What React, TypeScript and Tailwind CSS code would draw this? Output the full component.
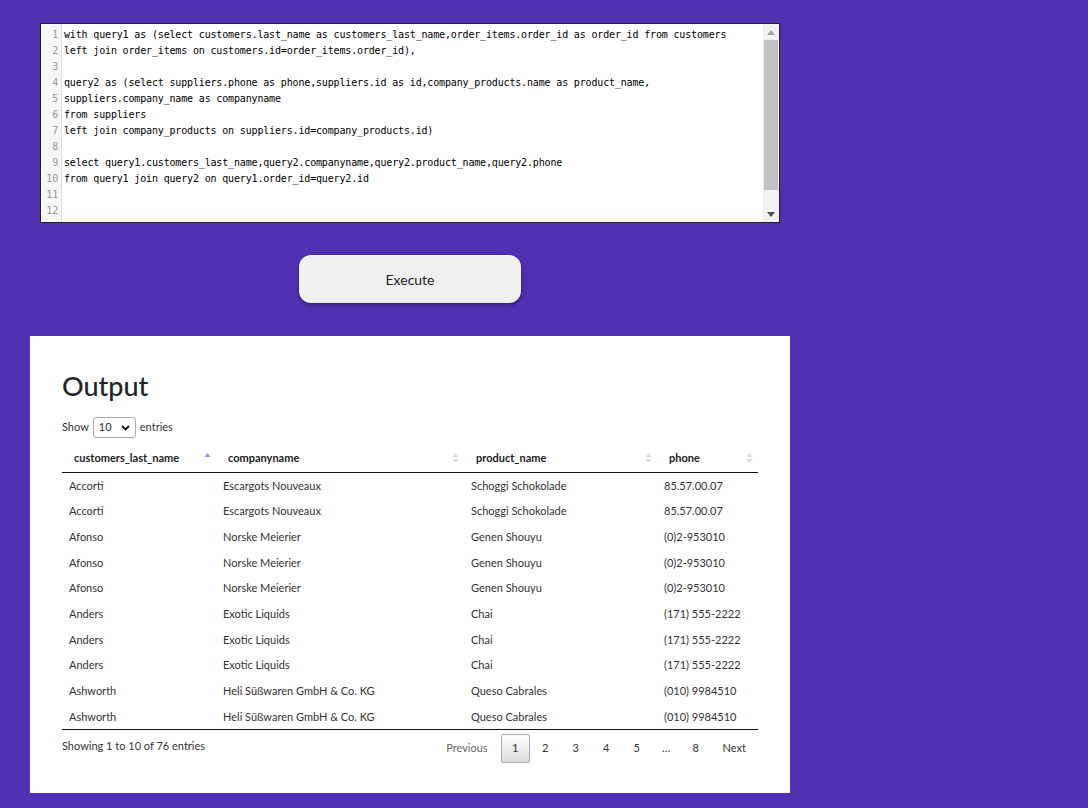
import React from "react";

const codeLines = [
  "with query1 as (select customers.last_name as customers_last_name,order_items.order_id as order_id from customers",
  "left join order_items on customers.id=order_items.order_id),",
  "",
  "query2 as (select suppliers.phone as phone,suppliers.id as id,company_products.name as product_name,",
  "suppliers.company_name as companyname",
  "from suppliers",
  "left join company_products on suppliers.id=company_products.id)",
  "",
  "select query1.customers_last_name,query2.companyname,query2.product_name,query2.phone",
  "from query1 join query2 on query1.order_id=query2.id",
  "",
  "",
];

const rows = [
  ["Accorti", "Escargots Nouveaux", "Schoggi Schokolade", "85.57.00.07"],
  ["Accorti", "Escargots Nouveaux", "Schoggi Schokolade", "85.57.00.07"],
  ["Afonso", "Norske Meierier", "Genen Shouyu", "(0)2-953010"],
  ["Afonso", "Norske Meierier", "Genen Shouyu", "(0)2-953010"],
  ["Afonso", "Norske Meierier", "Genen Shouyu", "(0)2-953010"],
  ["Anders", "Exotic Liquids", "Chai", "(171) 555-2222"],
  ["Anders", "Exotic Liquids", "Chai", "(171) 555-2222"],
  ["Anders", "Exotic Liquids", "Chai", "(171) 555-2222"],
  ["Ashworth", "Heli Süßwaren GmbH & Co. KG", "Queso Cabrales", "(010) 9984510"],
  ["Ashworth", "Heli Süßwaren GmbH & Co. KG", "Queso Cabrales", "(010) 9984510"],
];

function SortIcon({ active }: { active?: boolean }) {
  if (active) {
    return (
      <svg width="7" height="12" viewBox="0 0 7 12" className="shrink-0">
        <polygon points="3.5,1 6.5,5 0.5,5" fill="#8c94e8" />
      </svg>
    );
  }
  return (
    <svg width="7" height="12" viewBox="0 0 7 12" className="shrink-0">
      <polygon points="3.5,1 6.5,5 0.5,5" fill="#dcdcdc" />
      <polygon points="3.5,11 6.5,7 0.5,7" fill="#dcdcdc" />
    </svg>
  );
}

const headers = [
  { label: "customers_last_name", w: "w-[154px]", active: true },
  { label: "companyname", w: "w-[248px]" },
  { label: "product_name", w: "w-[193px]" },
  { label: "phone", w: "w-[101px]" },
];

const mono = { fontFamily: "'DejaVu Sans Mono', monospace", letterSpacing: "-0.16px" };

export default function App() {
  return (
    <div
      className="min-h-[808px] w-[1088px] bg-[#5131b1] pt-[23px] pb-[14px]"
      style={{ fontFamily: "Lato, 'Noto Sans', sans-serif" }}
    >
      {/* Editor */}
      <div className="ml-[40px] flex h-[200px] w-[740px] border border-[#222] bg-white">
        <div className="w-[21px] shrink-0 border-r border-[#ddd] bg-[#f7f7f7] pt-[3px]">
          {codeLines.map((_, i) => (
            <div
              key={i}
              className="h-[16px] pr-[3px] text-right text-[10px] leading-[16px] text-[#999]"
              style={mono}
            >
              {i + 1}
            </div>
          ))}
        </div>
        <div className="flex-1 pl-[2px] pt-[3px]">
          {codeLines.map((l, i) => (
            <div
              key={i}
              className="h-[16px] whitespace-pre text-[10px] leading-[16px] text-black"
              style={mono}
            >
              {l}
            </div>
          ))}
        </div>
        <div className="flex w-[16px] shrink-0 flex-col bg-[#f1f1f1]">
          <div className="flex h-[16px] items-center justify-center">
            <svg width="8" height="5" viewBox="0 0 8 5">
              <polygon points="4,0 8,5 0,5" fill="#a3a3a3" />
            </svg>
          </div>
          <div className="mx-[1px] h-[150px] bg-[#c1c1c1]" />
          <div className="flex-1" />
          <div className="flex h-[16px] items-center justify-center">
            <svg width="8" height="5" viewBox="0 0 8 5">
              <polygon points="0,0 8,0 4,5" fill="#505050" />
            </svg>
          </div>
        </div>
      </div>

      {/* Execute */}
      <div className="mt-[32px] ml-[299px]">
        <button
          className="h-[48px] w-[222px] rounded-[12px] bg-[#f0f0f0] text-[14px] text-[#222] shadow-[0_2px_4px_rgba(0,0,0,0.35)]"
          style={{ fontFamily: "Lato, 'Noto Sans', sans-serif" }}
        >
          Execute
        </button>
      </div>

      {/* Output panel */}
      <div className="mt-[33px] ml-[30px] w-[760px] bg-white px-[32px] pt-[30px] pb-[30px]">
        <h1 className="text-[27px] font-medium leading-[40px] text-[#212529]">Output</h1>
        <div className="mt-[11px] flex items-center text-[11px] text-[#333]">
          <span>Show</span>
          <div className="mx-[4px] flex h-[21px] w-[43px] items-center justify-between rounded-[3px] border border-[#aaa] px-[5px]">
            <span className="text-[11px]">10</span>
            <svg width="9" height="6" viewBox="0 0 9 6">
              <polyline points="1,1 4.5,4.5 8,1" fill="none" stroke="#111" strokeWidth="1.8" />
            </svg>
          </div>
          <span>entries</span>
        </div>

        <table className="mt-[6px] w-[696px] table-fixed border-collapse text-[11px]">
          <thead>
            <tr className="border-b border-[#111]">
              {headers.map((h) => (
                <th key={h.label} className={`${h.w} h-[28px] px-0 text-left font-bold text-[#222]`}>
                  <div className="flex items-center justify-between pl-[12px] pr-[5px]">
                    <span>{h.label}</span>
                    <SortIcon active={h.active} />
                  </div>
                </th>
              ))}
            </tr>
          </thead>
          <tbody>
            {rows.map((r, i) => (
              <tr key={i} className="h-[25.7px]">
                {r.map((c, j) => (
                  <td key={j} className="pl-[7px] pt-[2px] text-[#333]">
                    {c}
                  </td>
                ))}
              </tr>
            ))}
          </tbody>
        </table>
        <div className="border-t border-[#111]" />

        <div className="mt-[4px] flex items-center justify-between text-[11px] text-[#333]">
          <span className="mb-[5px]">Showing 1 to 10 of 76 entries</span>
          <div className="mr-[12px] flex items-center">
            <span className="mr-[13px] text-[#666]">Previous</span>
            <span className="flex h-[29px] w-[29px] items-center justify-center rounded-[2px] border border-[#aaa] bg-gradient-to-b from-white to-[#dcdcdc] text-[#333]">
              1
            </span>
            <span className="w-[31px] text-center">2</span>
            <span className="w-[30px] text-center">3</span>
            <span className="w-[31px] text-center">4</span>
            <span className="w-[30px] text-center">5</span>
            <span className="w-[29px] text-center">…</span>
            <span className="w-[30px] text-center">8</span>
            <span className="ml-[12px]">Next</span>
          </div>
        </div>
      </div>
    </div>
  );
}
